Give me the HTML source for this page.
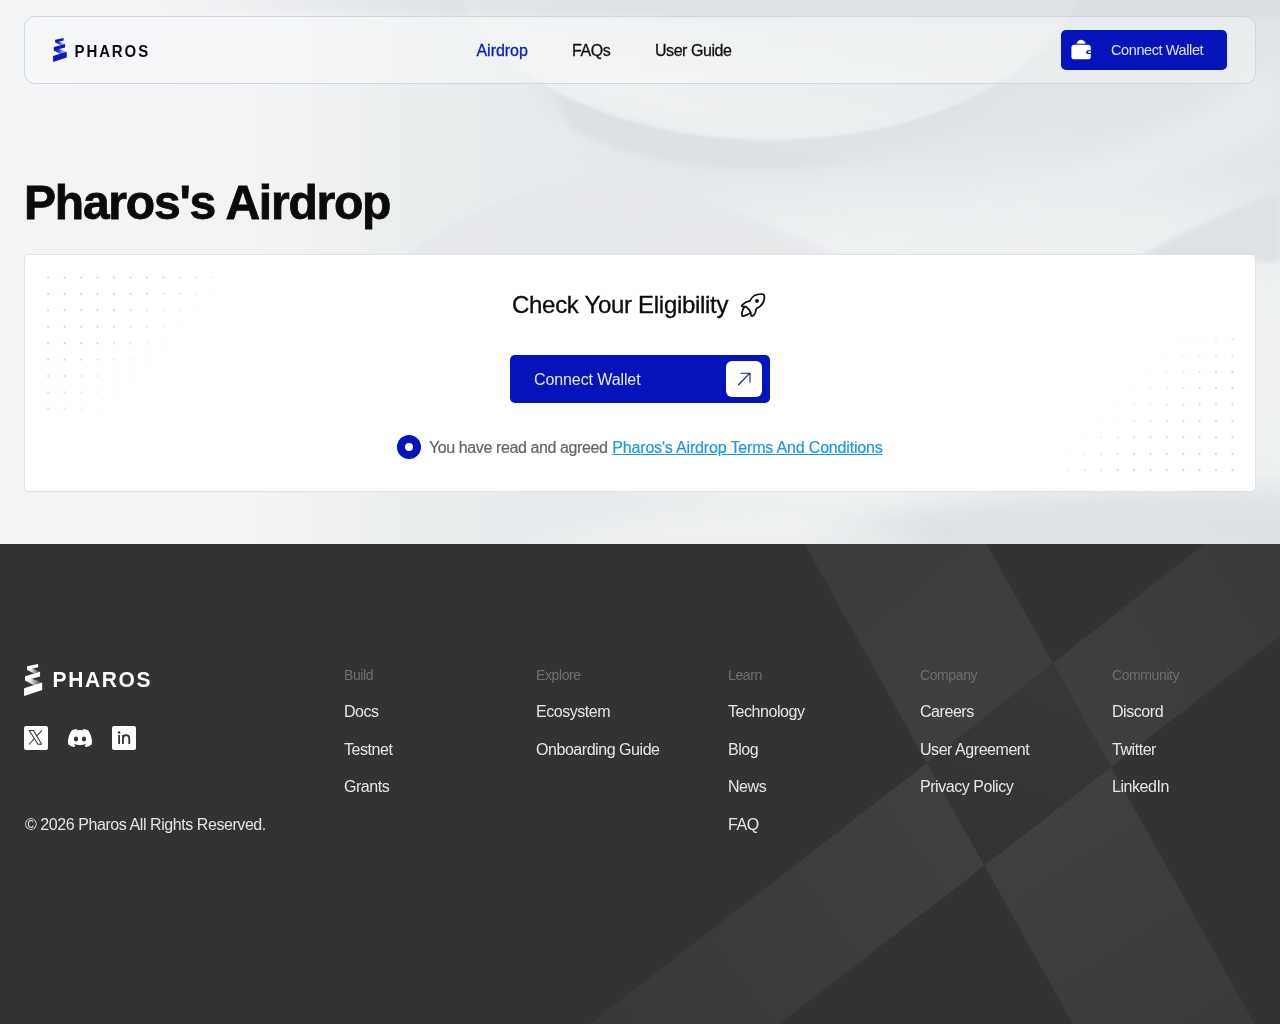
<!DOCTYPE html>
<html lang="en">
<head>
<meta charset="utf-8">
<title>Pharos Airdrop</title>
<style>
*{box-sizing:border-box;margin:0;padding:0}
html,body{width:1280px;height:1024px;overflow:hidden}
body{font-family:"Liberation Sans",Arial,sans-serif;background:#333;color:#111;position:relative}
a{text-decoration:none;color:inherit}
.hero{position:absolute;left:0;top:0;width:1280px;height:544px;background:#eceef0;overflow:hidden}
.hero svg.bg{position:absolute;left:0;top:0;width:1280px;height:544px}
.nav{position:absolute;left:24px;top:16px;width:1232px;height:68px;border:1px solid #d2d5d9;border-radius:11px;background:rgba(255,255,255,.3)}
.logo{position:absolute;left:28px;top:20px;height:26px;display:flex;align-items:center}
.logo span{font-weight:700;font-size:15px;letter-spacing:1.9px;color:#0b0b14;margin-left:7.5px;line-height:26px;transform:translateY(1.2px) scaleY(1.06);display:inline-block}
.navlinks{position:absolute;left:0;top:0;width:100%;height:66px}
.navlinks a{position:absolute;top:24px;font-size:16px;line-height:20px;letter-spacing:-.45px;color:#111;white-space:nowrap;-webkit-text-stroke:.3px currentColor}
.navlinks a.act{color:#0a1cb4}
.cw{position:absolute;left:1036px;top:13px;width:166px;height:40px;border-radius:5px;background:#0513ba;color:#e0e3ff;font-size:14.5px;letter-spacing:-.4px}
.cw svg{position:absolute;left:11px;top:9px}
.cw span{position:absolute;left:50px;top:0;line-height:40px;white-space:nowrap}
h1{position:absolute;left:23.5px;top:173.6px;font-size:48px;line-height:58px;font-weight:700;letter-spacing:-1.22px;-webkit-text-stroke:.8px #0b0b0b;color:#0b0b0b;white-space:nowrap}
.card{position:absolute;left:24px;top:254px;width:1232px;height:238px;background:#fff;border:1px solid #e0e2e5;border-radius:5px;overflow:hidden}
.dots{position:absolute;left:0;top:1px}
.card h2{position:absolute;left:486.5px;top:33.6px;font-size:24px;line-height:32px;font-weight:400;letter-spacing:-.3px;-webkit-text-stroke:.3px #0b0b0b;color:#0b0b0b;white-space:nowrap}
.rocket{position:absolute;left:715px;top:38px}
.btn{position:absolute;left:485px;top:100px;width:260px;height:48px;border-radius:5px;background:#0513ba;color:#e6e9ff;font-size:16px;letter-spacing:-.1px}
.btn span{position:absolute;left:24px;top:1px;line-height:48px;white-space:nowrap}
.btn i{position:absolute;right:8px;top:6px;width:36px;height:36px;border-radius:6px;background:#fff;display:block}
.btn i svg{position:absolute;left:9.5px;top:10px}
.agree{position:absolute;left:372px;top:180px;height:24px;white-space:nowrap;font-size:16px;letter-spacing:-.4px;color:#636363;line-height:24px}
.radio{position:absolute;left:0;top:0;width:24px;height:24px;border-radius:50%;background:#0513ba}
.radio:after{content:"";position:absolute;left:8px;top:8px;width:8px;height:8px;border-radius:50%;background:#fff}
.agree p{position:absolute;left:32px;top:1px;-webkit-text-stroke:.2px currentColor}
.agree a{color:#1a96ee;text-decoration:underline;letter-spacing:-.17px;margin-left:.8px}
.footer{position:absolute;left:0;top:544px;width:1280px;height:480px;background:#333;overflow:hidden;color:#e8e8e8}
.footer svg.fbg{position:absolute;left:0;top:0}
.flogo{position:absolute;left:24px;top:118px;height:36px;display:flex;align-items:center}
.flogo span{font-weight:700;font-size:21px;letter-spacing:1.6px;color:#fff;margin-left:10px;line-height:36px;display:inline-block;transform:scaleY(1.06)}
.soc{position:absolute;top:182px;width:24px;height:24px}
.copy{position:absolute;left:24.5px;top:812px;font-size:16px;letter-spacing:-.43px;color:#e4e4e4;line-height:24px;white-space:nowrap}
.col{position:absolute;top:0}
.col h4{position:absolute;top:121.8px;left:0;font-size:14px;font-weight:400;color:#6f6f6f;letter-spacing:-.4px;line-height:18px;white-space:nowrap}
.col a{position:absolute;left:0;font-size:16px;color:#e6e6e6;letter-spacing:-.45px;line-height:22px;white-space:nowrap}
.logo,.navlinks,.cw span,h1,.card h2,.btn span,.agree,.flogo,.copy,.col{will-change:transform}
</style>
</head>
<body>
<div class="hero">
  <svg class="bg" viewBox="0 0 1280 544" preserveAspectRatio="none">
    <defs>
      <linearGradient id="hg" x1="0" y1="0" x2="1" y2="0">
        <stop offset="0" stop-color="#f3f4f6"/><stop offset=".2" stop-color="#f2f3f5"/><stop offset=".33" stop-color="#eaedee"/><stop offset=".5" stop-color="#e6e9eb"/><stop offset=".75" stop-color="#e0e4e6"/><stop offset="1" stop-color="#e1e5e7"/>
      </linearGradient>
      <linearGradient id="bowl" x1="0" y1="0" x2="0" y2="1">
        <stop offset="0" stop-color="#fff" stop-opacity="0"/><stop offset=".5" stop-color="#fff" stop-opacity="0"/><stop offset="1" stop-color="#fff" stop-opacity=".4"/>
      </linearGradient>
      <filter id="b12" x="-20%" y="-20%" width="140%" height="140%"><feGaussianBlur stdDeviation="12"/></filter>
      <filter id="b3" x="-20%" y="-20%" width="140%" height="140%"><feGaussianBlur stdDeviation="2.5"/></filter>
      <filter id="b1"><feGaussianBlur stdDeviation=".8"/></filter>
    </defs>
    <rect width="1280" height="544" fill="url(#hg)"/>
    <filter id="b40" x="-30%" y="-30%" width="160%" height="160%"><feGaussianBlur stdDeviation="40"/></filter>
    <ellipse cx="1010" cy="370" rx="430" ry="200" fill="#fff" opacity=".42" filter="url(#b40)"/>
    <linearGradient id="ts" gradientUnits="userSpaceOnUse" x1="150" y1="0" x2="640" y2="0"><stop offset="0" stop-color="#dbdee1" stop-opacity="0"/><stop offset="1" stop-color="#dbdee1" stop-opacity="1"/></linearGradient>
    <path d="M150 -6H1290V17C1000 20 600 19 150 10z" fill="url(#ts)" filter="url(#b3)"/>
    <path d="M520 60C600 150 940 150 1020 60 960 200 580 200 520 60z" fill="#dde1e4" filter="url(#b12)" opacity=".8"/>
    <path d="M552 92C640 128 770 150 852 160 760 180 640 168 570 128z" fill="#dde1e4" filter="url(#b3)" opacity=".95"/>
    <ellipse cx="770" cy="-50" rx="320" ry="190" fill="url(#bowl)" filter="url(#b1)"/>
    <path d="M400 262C470 200 560 170 640 186 720 200 790 232 850 262z" fill="#e5e7ea" filter="url(#b3)" opacity=".75"/>
    <path d="M850 210C1000 215 1150 150 1280 60V130C1200 170 1000 240 850 210z" fill="#eceef0" filter="url(#b12)" opacity=".7"/>
    <path d="M1130 262C1180 232 1240 205 1280 192V262z" fill="#dfe2e5" filter="url(#b3)"/>
    <path d="M760 560C860 510 1000 485 1300 492V560z" fill="#dde1e3" filter="url(#b12)" opacity=".9"/>
    <path d="M520 550C640 505 800 500 940 550z" fill="#f1f2f3" filter="url(#b12)" opacity=".8"/>
  </svg>
  <div class="nav">
    <div class="logo">
      <svg width="14" height="24" viewBox="0 0 14 24"><defs><linearGradient id="lg1" x1="0" y1="0" x2="1" y2="0"><stop offset="0" stop-color="#0a1cb4"/><stop offset=".3" stop-color="#0a1cb4" stop-opacity=".9"/><stop offset=".9" stop-color="#0a1cb4" stop-opacity=".12"/></linearGradient></defs>
        <path d="M2.4 1.7 12.1 5.9v3.5L2.4 4.5z" fill="url(#lg1)"/><path d="M.9 9.1 13.7 13.8v5.7L.9 12.4z" fill="url(#lg1)"/><path d="M2.4 1.7 10.65 0v2.5L2.4 4.5z" fill="#0a1cb4"/><path d="M.9 9.1 12.1 5.9v3.5L.9 12.4z" fill="#0a1cb4"/><path d="M.05 18.1 13.7 13.8v5.7L.05 24z" fill="#0a1cb4"/></svg>
      <span>PHAROS</span>
    </div>
    <div class="navlinks">
      <a class="act" style="left:451.5px;letter-spacing:-.05px">Airdrop</a>
      <a style="left:547px">FAQs</a>
      <a style="left:630px">User Guide</a>
    </div>
    <div class="cw">
      <svg width="22" height="22" viewBox="-1 -1 22 22" style="left:9px;top:9px"><rect x=".4" y="4.8" width="19.4" height="14.5" rx="2.9" fill="#fff"/><path d="M6.3 3.8C5.6 3.8 5.5 3.2 5.9 2.6 6.9.9 8.4-.2 10.1-.2s3.2 1.1 4.2 2.8c.4.6.3 1.2-.4 1.2z" fill="#fff"/><path d="M20 10.25h-2.9a1.87 1.87 0 0 0 0 3.75H20z" fill="#0513ba"/><path d="M20 11.3h-2.2a.8.8 0 0 0 0 1.6H20z" fill="#fff"/></svg>
      <span>Connect Wallet</span>
    </div>
  </div>
  <h1>Pharos's Airdrop</h1>
  <div class="card">
    <svg class="dots" width="1230" height="235" viewBox="0 0 1230 235" fill="#9c9ca6"><circle cx="23.2" cy="21.5" r="1.1" opacity="0.42"/><circle cx="39.7" cy="21.5" r="1.1" opacity="0.42"/><circle cx="56.2" cy="21.5" r="1.1" opacity="0.42"/><circle cx="72.6" cy="21.5" r="1.1" opacity="0.42"/><circle cx="89.0" cy="21.5" r="1.1" opacity="0.42"/><circle cx="105.5" cy="21.5" r="1.1" opacity="0.42"/><circle cx="121.9" cy="21.5" r="1.1" opacity="0.42"/><circle cx="138.4" cy="21.5" r="1.1" opacity="0.40"/><circle cx="154.8" cy="21.5" r="1.1" opacity="0.33"/><circle cx="171.3" cy="21.5" r="1.1" opacity="0.25"/><circle cx="187.8" cy="21.5" r="1.1" opacity="0.18"/><circle cx="23.2" cy="37.9" r="1.1" opacity="0.42"/><circle cx="39.7" cy="37.9" r="1.1" opacity="0.42"/><circle cx="56.2" cy="37.9" r="1.1" opacity="0.42"/><circle cx="72.6" cy="37.9" r="1.1" opacity="0.42"/><circle cx="89.0" cy="37.9" r="1.1" opacity="0.42"/><circle cx="105.5" cy="37.9" r="1.1" opacity="0.42"/><circle cx="121.9" cy="37.9" r="1.1" opacity="0.40"/><circle cx="138.4" cy="37.9" r="1.1" opacity="0.32"/><circle cx="154.8" cy="37.9" r="1.1" opacity="0.24"/><circle cx="171.3" cy="37.9" r="1.1" opacity="0.17"/><circle cx="187.8" cy="37.9" r="1.1" opacity="0.09"/><circle cx="23.2" cy="54.3" r="1.1" opacity="0.42"/><circle cx="39.7" cy="54.3" r="1.1" opacity="0.42"/><circle cx="56.2" cy="54.3" r="1.1" opacity="0.42"/><circle cx="72.6" cy="54.3" r="1.1" opacity="0.42"/><circle cx="89.0" cy="54.3" r="1.1" opacity="0.42"/><circle cx="105.5" cy="54.3" r="1.1" opacity="0.39"/><circle cx="121.9" cy="54.3" r="1.1" opacity="0.31"/><circle cx="138.4" cy="54.3" r="1.1" opacity="0.24"/><circle cx="154.8" cy="54.3" r="1.1" opacity="0.16"/><circle cx="171.3" cy="54.3" r="1.1" opacity="0.08"/><circle cx="23.2" cy="70.8" r="1.1" opacity="0.42"/><circle cx="39.7" cy="70.8" r="1.1" opacity="0.42"/><circle cx="56.2" cy="70.8" r="1.1" opacity="0.42"/><circle cx="72.6" cy="70.8" r="1.1" opacity="0.42"/><circle cx="89.0" cy="70.8" r="1.1" opacity="0.38"/><circle cx="105.5" cy="70.8" r="1.1" opacity="0.31"/><circle cx="121.9" cy="70.8" r="1.1" opacity="0.23"/><circle cx="138.4" cy="70.8" r="1.1" opacity="0.15"/><circle cx="154.8" cy="70.8" r="1.1" opacity="0.08"/><circle cx="23.2" cy="87.2" r="1.1" opacity="0.42"/><circle cx="39.7" cy="87.2" r="1.1" opacity="0.42"/><circle cx="56.2" cy="87.2" r="1.1" opacity="0.42"/><circle cx="72.6" cy="87.2" r="1.1" opacity="0.37"/><circle cx="89.0" cy="87.2" r="1.1" opacity="0.30"/><circle cx="105.5" cy="87.2" r="1.1" opacity="0.22"/><circle cx="121.9" cy="87.2" r="1.1" opacity="0.15"/><circle cx="138.4" cy="87.2" r="1.1" opacity="0.07"/><circle cx="23.2" cy="103.6" r="1.1" opacity="0.42"/><circle cx="39.7" cy="103.6" r="1.1" opacity="0.42"/><circle cx="56.2" cy="103.6" r="1.1" opacity="0.37"/><circle cx="72.6" cy="103.6" r="1.1" opacity="0.29"/><circle cx="89.0" cy="103.6" r="1.1" opacity="0.21"/><circle cx="105.5" cy="103.6" r="1.1" opacity="0.14"/><circle cx="121.9" cy="103.6" r="1.1" opacity="0.06"/><circle cx="23.2" cy="120.0" r="1.1" opacity="0.42"/><circle cx="39.7" cy="120.0" r="1.1" opacity="0.36"/><circle cx="56.2" cy="120.0" r="1.1" opacity="0.28"/><circle cx="72.6" cy="120.0" r="1.1" opacity="0.21"/><circle cx="89.0" cy="120.0" r="1.1" opacity="0.13"/><circle cx="105.5" cy="120.0" r="1.1" opacity="0.05"/><circle cx="23.2" cy="136.4" r="1.1" opacity="0.35"/><circle cx="39.7" cy="136.4" r="1.1" opacity="0.27"/><circle cx="56.2" cy="136.4" r="1.1" opacity="0.20"/><circle cx="72.6" cy="136.4" r="1.1" opacity="0.12"/><circle cx="89.0" cy="136.4" r="1.1" opacity="0.05"/><circle cx="23.2" cy="152.9" r="1.1" opacity="0.27"/><circle cx="39.7" cy="152.9" r="1.1" opacity="0.19"/><circle cx="56.2" cy="152.9" r="1.1" opacity="0.11"/><circle cx="72.6" cy="152.9" r="1.1" opacity="0.04"/><circle cx="1207.4" cy="214.2" r="1.1" opacity="0.42"/><circle cx="1191.0" cy="214.2" r="1.1" opacity="0.42"/><circle cx="1174.6" cy="214.2" r="1.1" opacity="0.42"/><circle cx="1158.2" cy="214.2" r="1.1" opacity="0.42"/><circle cx="1141.8" cy="214.2" r="1.1" opacity="0.42"/><circle cx="1125.4" cy="214.2" r="1.1" opacity="0.42"/><circle cx="1109.0" cy="214.2" r="1.1" opacity="0.42"/><circle cx="1092.6" cy="214.2" r="1.1" opacity="0.40"/><circle cx="1076.2" cy="214.2" r="1.1" opacity="0.33"/><circle cx="1059.8" cy="214.2" r="1.1" opacity="0.25"/><circle cx="1043.4" cy="214.2" r="1.1" opacity="0.18"/><circle cx="1207.4" cy="197.8" r="1.1" opacity="0.42"/><circle cx="1191.0" cy="197.8" r="1.1" opacity="0.42"/><circle cx="1174.6" cy="197.8" r="1.1" opacity="0.42"/><circle cx="1158.2" cy="197.8" r="1.1" opacity="0.42"/><circle cx="1141.8" cy="197.8" r="1.1" opacity="0.42"/><circle cx="1125.4" cy="197.8" r="1.1" opacity="0.42"/><circle cx="1109.0" cy="197.8" r="1.1" opacity="0.40"/><circle cx="1092.6" cy="197.8" r="1.1" opacity="0.32"/><circle cx="1076.2" cy="197.8" r="1.1" opacity="0.24"/><circle cx="1059.8" cy="197.8" r="1.1" opacity="0.17"/><circle cx="1043.4" cy="197.8" r="1.1" opacity="0.09"/><circle cx="1207.4" cy="181.4" r="1.1" opacity="0.42"/><circle cx="1191.0" cy="181.4" r="1.1" opacity="0.42"/><circle cx="1174.6" cy="181.4" r="1.1" opacity="0.42"/><circle cx="1158.2" cy="181.4" r="1.1" opacity="0.42"/><circle cx="1141.8" cy="181.4" r="1.1" opacity="0.42"/><circle cx="1125.4" cy="181.4" r="1.1" opacity="0.39"/><circle cx="1109.0" cy="181.4" r="1.1" opacity="0.31"/><circle cx="1092.6" cy="181.4" r="1.1" opacity="0.24"/><circle cx="1076.2" cy="181.4" r="1.1" opacity="0.16"/><circle cx="1059.8" cy="181.4" r="1.1" opacity="0.08"/><circle cx="1207.4" cy="165.0" r="1.1" opacity="0.42"/><circle cx="1191.0" cy="165.0" r="1.1" opacity="0.42"/><circle cx="1174.6" cy="165.0" r="1.1" opacity="0.42"/><circle cx="1158.2" cy="165.0" r="1.1" opacity="0.42"/><circle cx="1141.8" cy="165.0" r="1.1" opacity="0.38"/><circle cx="1125.4" cy="165.0" r="1.1" opacity="0.31"/><circle cx="1109.0" cy="165.0" r="1.1" opacity="0.23"/><circle cx="1092.6" cy="165.0" r="1.1" opacity="0.15"/><circle cx="1076.2" cy="165.0" r="1.1" opacity="0.08"/><circle cx="1207.4" cy="148.6" r="1.1" opacity="0.42"/><circle cx="1191.0" cy="148.6" r="1.1" opacity="0.42"/><circle cx="1174.6" cy="148.6" r="1.1" opacity="0.42"/><circle cx="1158.2" cy="148.6" r="1.1" opacity="0.37"/><circle cx="1141.8" cy="148.6" r="1.1" opacity="0.30"/><circle cx="1125.4" cy="148.6" r="1.1" opacity="0.22"/><circle cx="1109.0" cy="148.6" r="1.1" opacity="0.15"/><circle cx="1092.6" cy="148.6" r="1.1" opacity="0.07"/><circle cx="1207.4" cy="132.2" r="1.1" opacity="0.42"/><circle cx="1191.0" cy="132.2" r="1.1" opacity="0.42"/><circle cx="1174.6" cy="132.2" r="1.1" opacity="0.37"/><circle cx="1158.2" cy="132.2" r="1.1" opacity="0.29"/><circle cx="1141.8" cy="132.2" r="1.1" opacity="0.21"/><circle cx="1125.4" cy="132.2" r="1.1" opacity="0.14"/><circle cx="1109.0" cy="132.2" r="1.1" opacity="0.06"/><circle cx="1207.4" cy="115.9" r="1.1" opacity="0.42"/><circle cx="1191.0" cy="115.9" r="1.1" opacity="0.36"/><circle cx="1174.6" cy="115.9" r="1.1" opacity="0.28"/><circle cx="1158.2" cy="115.9" r="1.1" opacity="0.21"/><circle cx="1141.8" cy="115.9" r="1.1" opacity="0.13"/><circle cx="1125.4" cy="115.9" r="1.1" opacity="0.05"/><circle cx="1207.4" cy="99.5" r="1.1" opacity="0.35"/><circle cx="1191.0" cy="99.5" r="1.1" opacity="0.27"/><circle cx="1174.6" cy="99.5" r="1.1" opacity="0.20"/><circle cx="1158.2" cy="99.5" r="1.1" opacity="0.12"/><circle cx="1141.8" cy="99.5" r="1.1" opacity="0.05"/><circle cx="1207.4" cy="83.1" r="1.1" opacity="0.27"/><circle cx="1191.0" cy="83.1" r="1.1" opacity="0.19"/><circle cx="1174.6" cy="83.1" r="1.1" opacity="0.11"/><circle cx="1158.2" cy="83.1" r="1.1" opacity="0.04"/></svg>
    <h2>Check Your Eligibility</h2>
    <svg class="rocket" width="26" height="26" viewBox="0 0 26 26" fill="none" stroke="#0b0b0b" stroke-width="1.7" stroke-linejoin="round" stroke-linecap="round"><path d="M10 7.8C11.5 4.2 15.5 1 21.5 1 23.6 1 24.4 1.9 24.4 3.8 24.4 9.5 21 13.5 16.4 15.6L15 20.6C14.6 21.8 12.8 23 11.8 23.1 11.2 23.1 10.9 22 10.8 19.6 9.5 17 8 15 6 13.7L2.6 13.6C1.6 13.6 1.4 12.8 2.2 12 4 10 7 8.3 10 7.8z"/><path d="M4.6 13.9C2.8 16 1.7 20 1.9 22.5 1.9 23.2 2.4 23.3 3 23.2 5.5 22.9 8 21.5 10.2 19.8"/><circle cx="17" cy="7.9" r="1.9" fill="#0b0b0b" stroke="none"/></svg>
    <div class="btn"><span>Connect Wallet</span><i><svg width="16" height="16" viewBox="0 0 16 16"><path d="M2.2 14 14 2.2M4.6 2.2H14v9.4" fill="none" stroke="#141a6e" stroke-width="1.1"/></svg></i></div>
    <div class="agree"><div class="radio"></div><p>You have read and agreed <a>Pharos's Airdrop Terms And Conditions</a></p></div>
  </div>
</div>
<div class="footer">
  <svg class="fbg" width="1280" height="480" viewBox="0 544 1280 480">
    <defs>
      <linearGradient id="fa" gradientUnits="userSpaceOnUse" x1="850" y1="544" x2="1000" y2="720"><stop offset="0" stop-color="#3c3c3c"/><stop offset="1" stop-color="#3f3f3f"/></linearGradient>
      <linearGradient id="fb" gradientUnits="userSpaceOnUse" x1="950" y1="800" x2="640" y2="1024"><stop offset="0" stop-color="#404040"/><stop offset="1" stop-color="#393939"/></linearGradient>
      <linearGradient id="fc" gradientUnits="userSpaceOnUse" x1="1080" y1="700" x2="1280" y2="580"><stop offset="0" stop-color="#3f3f3f"/><stop offset="1" stop-color="#3a3a3a"/></linearGradient>
      <linearGradient id="fd" gradientUnits="userSpaceOnUse" x1="1050" y1="820" x2="1180" y2="1024"><stop offset="0" stop-color="#404040"/><stop offset="1" stop-color="#3b3b3b"/></linearGradient>
      <linearGradient id="fx" gradientUnits="userSpaceOnUse" x1="1053" y1="663" x2="984" y2="865"><stop offset="0" stop-color="#383838"/><stop offset="1" stop-color="#333"/></linearGradient>
    </defs>
    <path d="M804.7 544H986.5L1053 663 927 763z" fill="url(#fa)"/>
    <path d="M1204.6 544H1280V636L1111 767 1053 663z" fill="url(#fc)"/>
    <path d="M927 763 984.5 865.5 779 1024H590z" fill="url(#fb)"/>
    <path d="M984.5 865.5 1111 767 1254.7 1024H1073z" fill="url(#fd)"/>
    <path d="M1053 663 1111 767 984.5 865.5 927 763z" fill="url(#fx)"/>
  </svg>
  <div class="flogo">
    <svg width="18.6" height="32" viewBox="0 0 14 24" preserveAspectRatio="none"><defs><linearGradient id="lg2" x1="0" y1="0" x2="1" y2="0"><stop offset="0" stop-color="#fff"/><stop offset=".3" stop-color="#fff" stop-opacity=".9"/><stop offset=".9" stop-color="#fff" stop-opacity=".12"/></linearGradient></defs>
      <path d="M2.4 1.7 12.1 5.9v3.5L2.4 4.5z" fill="url(#lg2)"/><path d="M.9 9.1 13.7 13.8v5.7L.9 12.4z" fill="url(#lg2)"/><path d="M2.4 1.7 10.65 0v2.5L2.4 4.5z" fill="#fff"/><path d="M.9 9.1 12.1 5.9v3.5L.9 12.4z" fill="#fff"/><path d="M.05 18.1 13.7 13.8v5.7L.05 24z" fill="#fff"/></svg>
    <span>PHAROS</span>
  </div>
  <svg class="soc" style="left:24px" viewBox="0 0 24 24"><rect width="24" height="24" rx="2" fill="#fff"/><path d="M17.9 4.4 5 18.5" stroke="#333" stroke-width="1.05" fill="none"/><path d="M5.3 4.5H9.5L17.6 18.2H13.9z" fill="#fff" stroke="#333" stroke-width="1.05" stroke-linejoin="round"/></svg>
  <svg class="soc" style="left:68px;top:185px;height:18.2px" viewBox="0 0 127.14 96.36"><path fill="#fff" d="M107.7,8.07A105.15,105.15,0,0,0,81.47,0a72.06,72.06,0,0,0-3.36,6.83A97.68,97.68,0,0,0,49,6.83,72.37,72.37,0,0,0,45.64,0,105.89,105.89,0,0,0,19.39,8.09C2.79,32.65-1.71,56.6.54,80.21h0A105.73,105.73,0,0,0,32.71,96.36,77.7,77.7,0,0,0,39.6,85.25a68.42,68.42,0,0,1-10.85-5.18c.91-.66,1.8-1.34,2.66-2a75.57,75.57,0,0,0,64.32,0c.87.71,1.76,1.39,2.66,2a68.68,68.68,0,0,1-10.87,5.19,77,77,0,0,0,6.89,11.1A105.25,105.25,0,0,0,126.6,80.22h0C129.24,52.84,122.09,29.11,107.7,8.07ZM42.45,65.69C36.18,65.69,31,60,31,53s5-12.74,11.43-12.74S54,46,53.89,53,48.84,65.69,42.45,65.69Zm42.24,0C78.41,65.69,73.25,60,73.25,53s5-12.74,11.44-12.74S96.23,46,96.12,53,91.08,65.69,84.69,65.69Z"/></svg>
  <svg class="soc" style="left:112px" viewBox="0 0 24 24"><rect width="24" height="24" rx="2" fill="#fff"/><circle cx="7.1" cy="6.6" r="1.25" fill="#333"/><path d="M7.1 9.1V17.9M11 9V17.9M11 12.6c0-2.3 1.3-3.4 3.2-3.4s3.05 1.1 3.05 3.4V17.9" stroke="#333" stroke-width="1.8" fill="none"/></svg>
  <div class="copy" style="top:269px">© 2026 Pharos All Rights Reserved.</div>
  <div class="col" style="left:344px"><h4>Build</h4><a style="top:157px">Docs</a><a style="top:195px">Testnet</a><a style="top:232px">Grants</a></div>
  <div class="col" style="left:536px"><h4>Explore</h4><a style="top:157px">Ecosystem</a><a style="top:195px">Onboarding Guide</a></div>
  <div class="col" style="left:728px"><h4>Learn</h4><a style="top:157px">Technology</a><a style="top:195px">Blog</a><a style="top:232px">News</a><a style="top:270px">FAQ</a></div>
  <div class="col" style="left:920px"><h4>Company</h4><a style="top:157px">Careers</a><a style="top:195px">User Agreement</a><a style="top:232px">Privacy Policy</a></div>
  <div class="col" style="left:1112px"><h4>Community</h4><a style="top:157px">Discord</a><a style="top:195px">Twitter</a><a style="top:232px">LinkedIn</a></div>
</div>
</body>
</html>
